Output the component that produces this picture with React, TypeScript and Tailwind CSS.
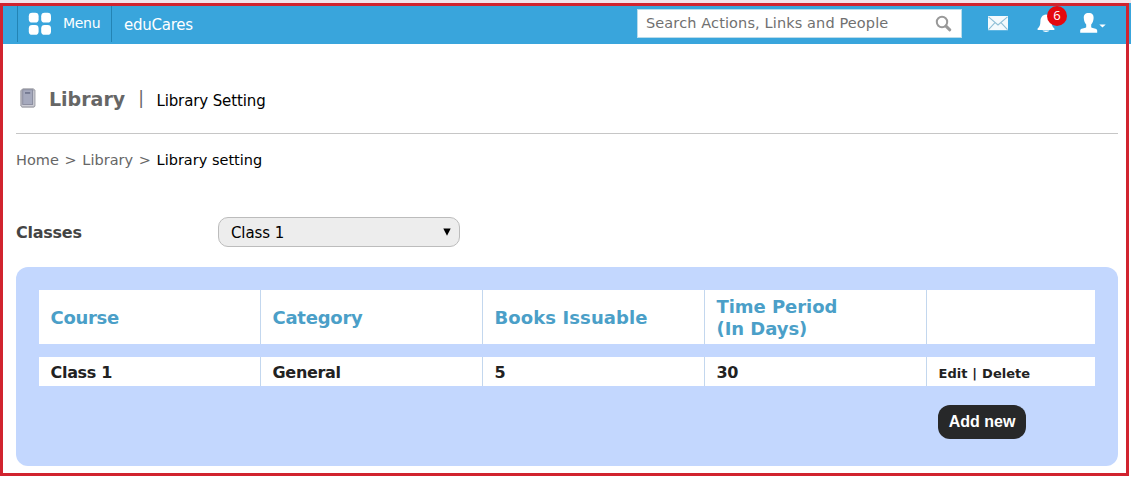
import React from "react";

const columns = [
  { label: "Course", tracking: "tracking-[-0.3px]" },
  { label: "Category", tracking: "tracking-[-0.25px]" },
  { label: "Books Issuable", tracking: "tracking-[0.1px]" },
  { label: "Time Period\n(In Days)", tracking: "tracking-[-0.05px]" },
];
const row = ["Class 1", "General", "5", "30"];

function MenuIcon() {
  return (
    <svg width="24" height="24" viewBox="0 0 24 24" fill="#fff" className="shrink-0">
      <rect x="0.8" y="0.8" width="9.8" height="9.8" rx="3.4" />
      <rect x="13.2" y="0.8" width="9.8" height="9.8" rx="3.4" />
      <rect x="0.8" y="13" width="9.8" height="9.8" rx="3.4" />
      <rect x="13.2" y="13" width="9.8" height="9.8" rx="3.4" />
    </svg>
  );
}

function SearchIcon() {
  return (
    <svg width="18" height="18" viewBox="0 0 18 18" fill="none" stroke="#999" className="shrink-0">
      <circle cx="7" cy="7" r="5.2" strokeWidth="2" />
      <path d="M11 11.2 L14.8 14.8" strokeWidth="3" strokeLinecap="round" />
    </svg>
  );
}

function MailIcon() {
  return (
    <svg width="20" height="15" viewBox="0 0 20 15" className="shrink-0">
      <rect width="20" height="14.2" fill="#f4fafd" />
      <path d="M0.5 0.8 L10 9 L19.5 0.8 M0.5 13.6 L7 6.6 M19.5 13.6 L13 6.6" fill="none" stroke="#8fbfd6" strokeWidth="1.1" />
    </svg>
  );
}

function BellIcon() {
  return (
    <svg width="18" height="19" viewBox="0 0 18 19" fill="#fff" className="shrink-0">
      <path d="M9 0.5 C5.2 0.9 3.5 3.6 3.4 7.5 C3.3 11.2 2.6 13 0.6 14.4 V16 H17.4 V14.4 C15.4 13 14.7 11.2 14.6 7.5 C14.5 3.6 12.8 0.9 9 0.5 Z" />
      <path d="M5.5 16.6 H12.5 C11.8 18.4 6.2 18.4 5.5 16.6 Z" />
    </svg>
  );
}

function UserIcon() {
  return (
    <svg width="26" height="21" viewBox="0 0 26 21" fill="#fff" className="shrink-0">
      <path d="M8.7 0 C5 0 3.7 2 3.8 5 C3.9 7.8 4.8 10 6.2 11.5 V14.2 C4.6 15.4 0.5 15 0.2 17.4 V19.8 H17.2 V17.4 C16.9 15 12.8 15.4 11.2 14.2 V11.5 C12.6 10 13.5 7.8 13.6 5 C13.7 2 12.4 0 8.7 0 Z" />
      <path d="M19.3 11.6 H25.7 L22.5 14.6 Z" />
    </svg>
  );
}

function BookIcon() {
  return (
    <svg width="16" height="20" viewBox="0 0 16 20" className="shrink-0">
      <path d="M3 0.8 H13.5 L15 2.3 V18.2 L13.8 19.2 H2 L0.8 18 V2.5 Z" fill="#b4b5bf" stroke="#95959c" strokeWidth="0.8" />
      <rect x="2.8" y="1.8" width="9.8" height="14.6" fill="#a5a9bd" stroke="#85889a" strokeWidth="0.8" />
      <rect x="5" y="4.2" width="5.2" height="1.5" fill="#6a6f88" />
      <path d="M1.8 17.6 H13.8 V3" fill="none" stroke="#d3d3da" strokeWidth="0.9" />
    </svg>
  );
}

function Header() {
  return (
    <header className="flex h-[41px] items-start bg-[#39a5dc] text-white">
      <div className="mt-[3px] ml-[17px] flex h-[36px] w-[95px] items-start border-x border-[#2384b4] pl-[10px]">
        <div className="mt-[6px]"><MenuIcon /></div>
        <span className="ml-[11px] mt-[6px] text-[14px] leading-[22px] tracking-[-0.3px]">Menu</span>
      </div>
      <span className="ml-[12px] mt-[11px] text-[15px] leading-[22px] tracking-[-0.25px]">eduCares</span>
      <div className="ml-auto mt-[6px] flex h-[29px] w-[325px] items-center border border-[#b9dceb] bg-white pr-[8px] pl-[8px]">
        <span className="flex-1 pt-px text-[14.5px] tracking-[0.12px] whitespace-nowrap text-[#707070]">Search Actions, Links and People</span>
        <SearchIcon />
      </div>
      <div className="mt-[13px] ml-[26px]"><MailIcon /></div>
      <div className="relative mt-[11px] ml-[29px]">
        <BellIcon />
        <span className="absolute -top-[8px] left-[10px] flex size-[20px] items-center justify-center rounded-full bg-[#e4080f] font-['Open_Sans','Noto_Sans',sans-serif] text-[13px]">6</span>
      </div>
      <div className="mt-[10px] mr-[25px] ml-[25px]"><UserIcon /></div>
    </header>
  );
}

export default function App() {
  return (
    <div className="relative h-[479px] w-[1131px] overflow-hidden bg-white pt-[3px] font-['DejaVu_Sans',Verdana,sans-serif] text-black">
      <Header />
      <main className="pr-[13px] pl-[16px]">
        <div className="flex h-[90px] items-start border-b border-[#c6c6c6] pt-[44px]">
          <div className="ml-[4px]"><BookIcon /></div>
          <h1 className="ml-[13px] text-[19px] leading-[22px] font-bold text-[#666]">Library</h1>
          <span className="ml-[13px] text-[17px] leading-[20px] text-[#666]">|</span>
          <span className="ml-[12.5px] pt-[2px] text-[15px] leading-[22px] tracking-[-0.12px]">Library Setting</span>
        </div>
        <nav className="mt-[15px] flex gap-[5.7px] text-[14.5px] leading-[22px] text-[#666]">
          <span>Home</span>
          <span>&gt;</span>
          <span>Library</span>
          <span>&gt;</span>
          <span className="text-black">Library setting</span>
        </nav>
        <div className="mt-[46px] flex h-[30px] items-center">
          <label className="w-[202px] pt-px text-[16px] font-bold tracking-[-0.25px] text-[#444]">Classes</label>
          <div className="flex h-[30px] w-[242px] items-center justify-between rounded-[10px] border border-[#bcbcbc] bg-[#ededed] pr-[8px] pl-[12px] text-[15px]">
            <span className="pt-[2px] tracking-[-0.1px]">Class 1</span>
            <svg width="8" height="8" viewBox="0 0 8 8"><path d="M0.3 0.5 H7.7 L4 7.8 Z" /></svg>
          </div>
        </div>
        <section className="mt-[20px] h-[199px] rounded-[12px] bg-[#c3d7fe] pt-[23px] pr-[23px] pl-[23px]">
          <div className="grid h-[54px] grid-cols-[222px_222px_222px_222px_1fr] bg-white text-[18px] leading-[22px] font-bold text-[#4b9fc8]">
            {columns.map((c) => (
              <div key={c.label} className="flex items-center border-r border-[#c3d7ee] pt-[2px] pl-[11.5px] whitespace-pre">
                <span className={c.tracking}>{c.label}</span>
              </div>
            ))}
          </div>
          <div className="mt-[13px] grid h-[29px] grid-cols-[222px_222px_222px_222px_1fr] bg-white text-[16px] font-bold tracking-[-0.3px] text-[#222]">
            {row.map((c) => (
              <div key={c} className="flex items-center border-r border-[#c3d7ee] pt-[2px] pl-[11.5px]">{c}</div>
            ))}
            <div className="flex items-center gap-[5px] pt-[4px] pl-[11.5px] text-[13px] tracking-normal">
              <span>Edit</span>
              <span>|</span>
              <span>Delete</span>
            </div>
          </div>
          <button className="mt-[19px] ml-[899px] flex h-[34px] w-[88px] items-center justify-center rounded-[12px] bg-[#272829] font-['Liberation_Sans',Arial,sans-serif] text-[16px] font-bold whitespace-nowrap text-white">
            Add new
          </button>
        </section>
      </main>
      <div className="pointer-events-none absolute top-[3px] left-0 h-[473px] w-[1129px] border-[3px] border-[#d1232f]" />
      <div className="absolute top-0 left-0 h-[3px] w-full bg-[#f3e3ea]" />
    </div>
  );
}
